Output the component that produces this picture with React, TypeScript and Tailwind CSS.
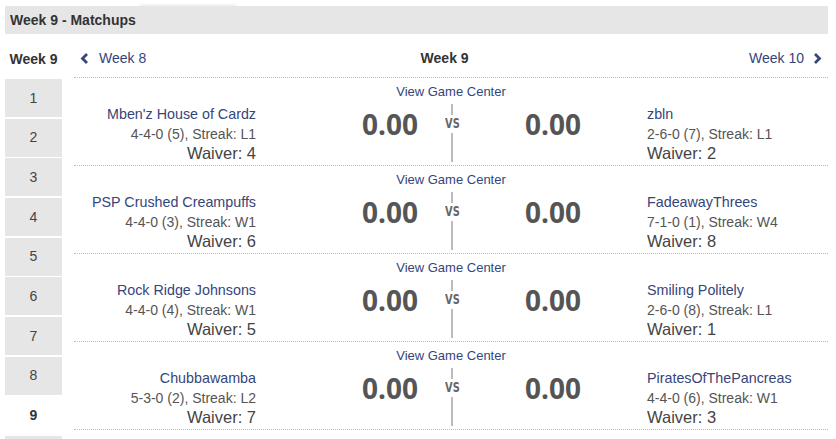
import React from "react";

const NAVY = "text-[#36457a]";

type Team = { name: string; record: string; waiver: string };
const matchups: { l: Team; r: Team }[] = [
  {
    l: { name: "Mben'z House of Cardz", record: "4-4-0 (5), Streak: L1", waiver: "Waiver: 4" },
    r: { name: "zbln", record: "2-6-0 (7), Streak: L1", waiver: "Waiver: 2" },
  },
  {
    l: { name: "PSP Crushed Creampuffs", record: "4-4-0 (3), Streak: W1", waiver: "Waiver: 6" },
    r: { name: "FadeawayThrees", record: "7-1-0 (1), Streak: W4", waiver: "Waiver: 8" },
  },
  {
    l: { name: "Rock Ridge Johnsons", record: "4-4-0 (4), Streak: W1", waiver: "Waiver: 5" },
    r: { name: "Smiling Politely", record: "2-6-0 (8), Streak: L1", waiver: "Waiver: 1" },
  },
  {
    l: { name: "Chubbawamba", record: "5-3-0 (2), Streak: L2", waiver: "Waiver: 7" },
    r: { name: "PiratesOfThePancreas", record: "4-4-0 (6), Streak: W1", waiver: "Waiver: 3" },
  },
];

function Chevron({ dir }: { dir: "left" | "right" }) {
  return (
    <svg width="9" height="11" viewBox="0 0 9 11" className="shrink-0">
      {dir === "left" ? (
        <polyline points="7,1 2.5,5.5 7,10" fill="none" stroke="#36457a" strokeWidth="2.8" />
      ) : (
        <polyline points="2,1 6.5,5.5 2,10" fill="none" stroke="#36457a" strokeWidth="2.8" />
      )}
    </svg>
  );
}

function TeamBlock({ t, align }: { t: Team; align: "left" | "right" }) {
  return (
    <div className={align === "right" ? "text-right" : "text-left"}>
      <div className={`text-[14.3px] leading-[20px] whitespace-nowrap ${NAVY}`}>{t.name}</div>
      <div className="text-[14px] leading-[20px] whitespace-nowrap text-[#555]">{t.record}</div>
      <div className="text-[16.5px] leading-[18px] whitespace-nowrap text-[#444]">{t.waiver}</div>
    </div>
  );
}

function Score() {
  return (
    <div
      className="h-[40px] w-[100px] text-center text-[28px] leading-[40px] font-bold text-[#555]"
      style={{ fontFamily: '"Open Sans", sans-serif' }}
    >
      0.00
    </div>
  );
}

export default function App() {
  return (
    <div
      className="w-[836px] h-[439px] overflow-hidden bg-white"
      style={{ fontFamily: '"Liberation Sans", Arial, sans-serif' }}
    >
      <div className="h-[4px]" />
      <div className="ml-[140px] h-[2px] w-[96px] bg-[#f3f3f3]" />
      <div className="ml-[5px] mr-[8px] h-[28px] bg-[#e6e6e6] flex items-center pl-[5px]">
        <span className="text-[14px] font-bold text-[#333]">Week 9 - Matchups</span>
      </div>
      <div className="flex">
        {/* sidebar */}
        <div className="ml-[5px] w-[57px] flex flex-col">
          <div className="h-[45px] pt-[5px] flex items-center justify-center text-[14px] font-bold text-[#333]">
            Week 9
          </div>
          <div className="flex flex-col gap-[1.7px]">
            {[1, 2, 3, 4, 5, 6, 7, 8, 9].map((n) => (
              <div
                key={n}
                className={
                  n === 9
                    ? "h-[38px] flex items-center justify-center bg-white text-[14px] font-bold text-[#333]"
                    : "h-[38px] flex items-center justify-center bg-[#e6e6e6] text-[14px] text-[#444]"
                }
              >
                {n}
              </div>
            ))}
            <div className="h-[38px] bg-[#e6e6e6]" />
          </div>
        </div>
        {/* main */}
        <div className="ml-[12px] w-[754px] flex flex-col">
          <div className="h-[44px] pt-[6px] flex items-center justify-between border-b border-dotted border-[#bbb] px-[6px] text-[14px]">
            <div className="flex items-center gap-[10px]">
              <Chevron dir="left" />
              <span className={NAVY}>Week 8</span>
            </div>
            <span className="font-bold text-[#333] pr-[6px]">Week 9</span>
            <div className="flex items-center gap-[9px]">
              <span className={NAVY}>Week 10</span>
              <Chevron dir="right" />
            </div>
          </div>
          {matchups.map((m, i) => (
            <div key={i} className="h-[88px] border-b border-dotted border-[#bbb] flex flex-col pt-[6px]">
              <div className={`h-[16px] leading-[16px] text-center text-[13px] ${NAVY}`}>View Game Center</div>
              <div className="mt-[4px] flex flex-1">
                <div className="w-[182px] flex justify-end">
                  <TeamBlock t={m.l} align="right" />
                </div>
                <div className="w-[84px]" />
                <Score />
                <div className="w-[24px] flex flex-col items-center pb-[3px]">
                  <div className="w-[2px] h-[11px] bg-[#bbb]" />
                  <div
                    className="h-[16px] leading-[16px] text-[14px] font-bold text-[#666] scale-x-[0.78]"
                    style={{ fontFamily: '"DejaVu Sans Condensed", "DejaVu Sans", sans-serif' }}
                  >
                    VS
                  </div>
                  <div className="w-[2px] flex-1 mt-[2px] bg-[#bbb]" />
                </div>
                <div className="w-[39px]" />
                <Score />
                <div className="w-[44px]" />
                <div className="flex-1">
                  <TeamBlock t={m.r} align="left" />
                </div>
              </div>
            </div>
          ))}
        </div>
      </div>
    </div>
  );
}
